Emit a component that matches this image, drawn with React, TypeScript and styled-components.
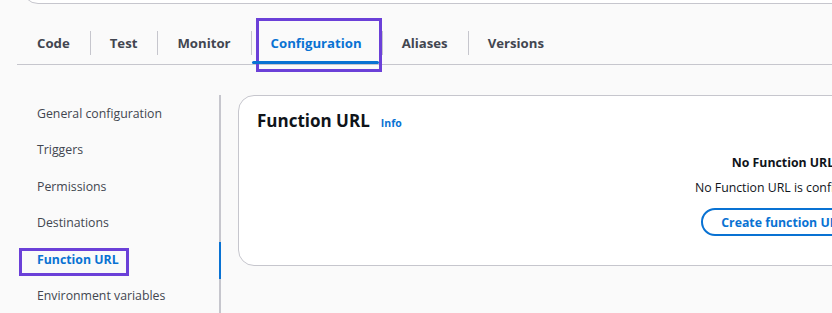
import React from "react";
import styled, { createGlobalStyle } from "styled-components";

const GlobalStyle = createGlobalStyle`
  html, body { margin: 0; padding: 0; overflow: hidden; background: #fafafa; }
  body { font-family: "Open Sans", "Noto Sans", sans-serif; color: #0f141a; }
  * { box-sizing: border-box; }
`;

const ACCENT = "#0972d3";
const BORDER = "#c6c6cd";
const MARK = "#6b40d8";

const Page = styled.div`
  width: 1360px;
  display: flex;
  flex-direction: column;
`;

const TopCard = styled.div`
  margin: -36px 0 0 22px;
  height: 40px;
  background: #ffffff;
  border: 1px solid ${BORDER};
  border-radius: 16px;
`;

const TabList = styled.div`
  margin: 16px 0 0 17px;
  display: flex;
  align-items: stretch;
  border-bottom: 1px solid ${BORDER};
`;

const Tab = styled.div<{ $active?: boolean; $first?: boolean }>`
  position: relative;
  height: 44px;
  padding: 2px 20px 0;
  display: flex;
  align-items: center;
  font-size: 13.2px;
  font-weight: 700;
  color: ${(p) => (p.$active ? ACCENT : "#424650")};
  &::before {
    content: "";
    display: ${(p) => (p.$first ? "none" : "block")};
    position: absolute;
    left: 0;
    top: 11px;
    height: 24px;
    width: 1px;
    background: ${BORDER};
  }
  &::after {
    content: "";
    display: ${(p) => (p.$active ? "block" : "none")};
    position: absolute;
    left: 1px;
    right: 3px;
    bottom: 0;
    height: 3px;
    border-radius: 2px;
    background: ${ACCENT};
  }
`;

const TabMark = styled.span`
  position: absolute;
  left: 5px;
  right: 0;
  top: -2px;
  bottom: -8px;
  border: 3px solid ${MARK};
  pointer-events: none;
`;

const Body = styled.div`
  margin: 30px 0 0 17px;
  display: flex;
  align-items: flex-start;
  gap: 17px;
`;

const SideNav = styled.nav`
  width: 204px;
  padding-left: 20px;
  min-height: 240px;
  border-right: 2px solid ${BORDER};
  display: flex;
  flex-direction: column;
`;

const NavItem = styled.div<{ $active?: boolean }>`
  position: relative;
  height: 36.5px;
  display: flex;
  align-items: center;
  font-size: 12.3px;
  font-weight: ${(p) => (p.$active ? 700 : 400)};
  color: ${(p) => (p.$active ? ACCENT : "#424650")};
  &::after {
    content: "";
    display: ${(p) => (p.$active ? "block" : "none")};
    position: absolute;
    right: -2px;
    top: 1px;
    bottom: -1px;
    width: 2px;
    background: ${ACCENT};
  }
`;

const NavMark = styled.span`
  position: absolute;
  left: -18px;
  top: 7px;
  width: 110px;
  height: 28px;
  border: 3px solid ${MARK};
  pointer-events: none;
`;

const Card = styled.section`
  width: 1090px;
  height: 171px;
  background: #ffffff;
  border: 1px solid ${BORDER};
  border-radius: 16px;
  padding: 14px 18px 0;
  display: flex;
  flex-direction: column;
`;

const CardHeader = styled.div`
  display: flex;
  align-items: baseline;
  gap: 11px;
  height: 22px;
`;

const Title = styled.h2`
  margin: 0;
  font-size: 17px;
  line-height: 22px;
  font-weight: 700;
  color: #0f141a;
`;

const InfoLink = styled.a`
  font-size: 10.5px;
  font-weight: 700;
  color: ${ACCENT};
  text-decoration: none;
`;

const Empty = styled.div`
  margin-top: 22px;
  display: flex;
  flex-direction: column;
  align-items: center;
`;

const EmptyTitle = styled.div`
  font-size: 12.3px;
  line-height: 18px;
  font-weight: 700;
  color: #0f141a;
`;

const EmptyText = styled.div`
  margin-top: 7px;
  font-size: 12.3px;
  line-height: 18px;
  color: #0f141a;
`;

const OutlineButton = styled.button`
  margin-top: 11px;
  height: 28px;
  padding: 0 18px;
  border: 2px solid ${ACCENT};
  border-radius: 20px;
  background: #ffffff;
  color: ${ACCENT};
  font-family: inherit;
  font-size: 12.3px;
  font-weight: 700;
`;

const tabs = ["Code", "Test", "Monitor", "Configuration", "Aliases", "Versions"];
const navItems = [
  "General configuration",
  "Triggers",
  "Permissions",
  "Destinations",
  "Function URL",
  "Environment variables",
];

export default function App() {
  return (
    <Page>
      <GlobalStyle />
      <TopCard />
      <TabList>
        {tabs.map((t, i) => (
          <Tab key={t} $first={i === 0} $active={t === "Configuration"}>
            {t}
            {t === "Configuration" && <TabMark />}
          </Tab>
        ))}
      </TabList>
      <Body>
        <SideNav>
          {navItems.map((n) => (
            <NavItem key={n} $active={n === "Function URL"}>
              {n}
              {n === "Function URL" && <NavMark />}
            </NavItem>
          ))}
        </SideNav>
        <Card>
          <CardHeader>
            <Title>Function URL</Title>
            <InfoLink href="#">Info</InfoLink>
          </CardHeader>
          <Empty>
            <EmptyTitle>No Function URL</EmptyTitle>
            <EmptyText>No Function URL is configured.</EmptyText>
            <OutlineButton>Create function URL</OutlineButton>
          </Empty>
        </Card>
      </Body>
    </Page>
  );
}
